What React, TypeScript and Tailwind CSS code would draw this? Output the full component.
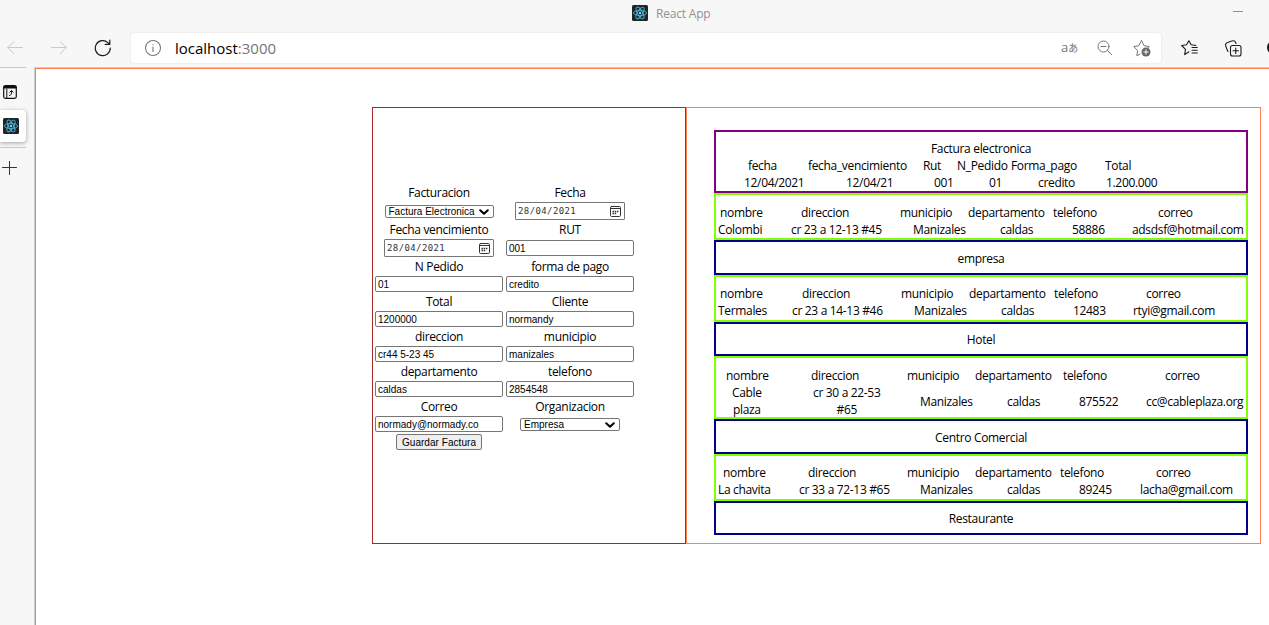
import React from "react";

function ReactMark() {
  return (
    <svg width="16" height="16" viewBox="0 0 16 16" className="block shrink-0">
      <rect width="16" height="16" rx="1.5" fill="#20232a" />
      <g fill="none" stroke="#4fb3cf" strokeWidth="0.9">
        <ellipse cx="8" cy="8" rx="6.6" ry="2.6" />
        <ellipse cx="8" cy="8" rx="6.6" ry="2.6" transform="rotate(60 8 8)" />
        <ellipse cx="8" cy="8" rx="6.6" ry="2.6" transform="rotate(120 8 8)" />
      </g>
      <circle cx="8" cy="8" r="1.3" fill="#61dafb" />
    </svg>
  );
}

function Svg({ w, h, color, sw = 1, className = "", children }: { w: number; h: number; color: string; sw?: number; className?: string; children: React.ReactNode }) {
  return (
    <svg width={w} height={h} viewBox={`0 0 ${w} ${h}`} fill="none" stroke={color} strokeWidth={sw} strokeLinecap="round" strokeLinejoin="round" className={`block shrink-0 ${className}`}>
      {children}
    </svg>
  );
}

function TitleBar() {
  return (
    <div className="flex h-[33px] items-start pl-[632px] pt-[5px]">
      <ReactMark />
      <span className="ml-2 w-[577px] text-[12px] leading-[18px] tracking-[-0.2px] text-[#929292]">React App</span>
      <span className="mt-[6px] h-px w-[10px] bg-[#8f8f8f]" />
    </div>
  );
}

function Toolbar() {
  return (
    <div className="flex h-[34px] items-start">
      <Svg w={16} h={14} color="#c9c9c9" className="ml-[7px] mt-[8px]">
        <path d="M7 .7.7 6.5 7 12.8M.7 6.5H15.5" />
      </Svg>
      <Svg w={16} h={14} color="#c9c9c9" className="ml-[28px] mt-[8px]">
        <path d="M9 .7l6.3 5.8L9 12.8M15.3 6.5H.5" />
      </Svg>
      <Svg w={18} h={18} color="#1b1b1b" sw={1.2} className="ml-[27px] mt-[6px]">
        <path d="M16.3 9a7.5 7.5 0 1 1-2.4-5.400l1.600 1.500M15.800 1v4.400H11.200" />
      </Svg>
      <div className="ml-[19px] flex h-[30px] w-[1030px] shrink-0 items-start rounded-[4px] bg-white shadow-[0_0_3px_rgba(0,0,0,0.08)]">
        <Svg w={18} h={18} color="#767676" sw={1.1} className="ml-[13px] mt-[6px]">
          <circle cx="9" cy="9" r="7.5" />
          <path d="M9 8v4.500M9 5.500v.2" />
        </Svg>
        <span className="ml-[13px] w-[886px] shrink-0 text-[15px] leading-[30px] text-[#767676]"><span className="text-black">localhost</span>:3000</span>
        <span className="w-[20px] shrink-0 whitespace-nowrap text-[13px] leading-[28px] text-[#767676]">a<span className="text-[10px]">あ</span></span>
        <Svg w={16} h={16} color="#767676" className="ml-[16px] mt-[7px]">
          <circle cx="6.5" cy="6.5" r="5.5" />
          <path d="M4 6.500h5M10.500 10.500l4.200 4.200" />
        </Svg>
        <Svg w={18} h={18} color="#767676" className="ml-[20px] mt-[6px]">
          <path d="M7 15.200l-3.200 1.500.8-5L.8 7.500l5-.8L8.500 1.300l2.500 5.400 5.200.8-1.500 1.500" />
          <circle cx="13" cy="13" r="4.5" fill="#666" stroke="none" />
          <path d="M10.800 13h4.400M13 10.800v4.400" stroke="#fff" />
        </Svg>
      </div>
      <Svg w={18} h={17} color="#1b1b1b" sw={1.1} className="ml-[20px] mt-[7px]">
        <path d="M8 11.800l-4.300 2.800.8-5.300L.7 5.500l4.800-.7L7.900.8l2.300 4 4.800.7M11 7.500h5.300M11 10.300h5.300M11 13h5.300" />
      </Svg>
      <Svg w={17} h={17} color="#1b1b1b" sw={1.1} className="ml-[26px] mt-[7px]">
        <path d="M3 11.500C1.500 8.500.2 5.500.7 4 1.200 2.500 7.500.5 9 .7c1.300.2 1.500 1.800 2 2.800" />
        <rect x="5.5" y="5.5" width="10.5" height="10.5" rx="2" />
        <path d="M10.750 8v5.500M8 10.750h5.500" />
      </Svg>
      <span className="ml-[25px] mt-[7px] size-[15px] shrink-0 rounded-full bg-[#1b1b1b]" />
    </div>
  );
}

function TabStrip() {
  return (
    <div className="flex w-[34px] shrink-0 flex-col">
      <div className="h-px w-[26px] bg-[#c9c9c9]" />
      <Svg w={14} h={14} color="#111" sw={1.2} className="ml-[3px] mt-[17px]">
        <rect x=".7" y=".7" width="12.6" height="12.6" rx="1.8" />
        <path d="M1 1.500h12v1.500H1z" fill="#111" />
        <path d="M3.800 4v9" strokeWidth="1" />
        <path d="M6.500 10.500c1.800 0 2.300-1.500 2-4.500M6.800 7.200 8.500 5.500l1.700 1.700" strokeWidth="1" />
      </Svg>
      <div className="mt-[11px] flex h-[32px] w-[26px] items-center rounded-r-[4px] bg-white pl-[3px] shadow-[0_1px_4px_rgba(0,0,0,0.35)]"><ReactMark /></div>
      <div className="mt-[5px] h-px w-[26px] bg-[#c9c9c9]" />
      <Svg w={15} h={14} color="#333" className="ml-[2px] mt-[13px]"><path d="M7.500.5v13M.5 6.500h14" /></Svg>
    </div>
  );
}

function Field({ label, value }: { label: string; value: string }) {
  return (
    <label className="flex h-[35px] w-[128px] flex-col items-center">
      <span className="leading-[18px]">{label}</span>
      <TextBox value={value} />
    </label>
  );
}

function TextBox({ value }: { value: string }) {
  return <input defaultValue={value} className="block h-[16px] w-[128px] rounded-[2px] border border-[#767676] bg-white px-[2px] pt-px font-['Liberation_Sans',sans-serif] text-[10px] leading-[13px] tracking-normal text-black" />;
}

function Choice({ value, className }: { value: string; className: string }) {
  return (
    <button className={`flex h-[13px] items-center justify-between rounded-[2px] border border-[#767676] bg-white pl-[3px] pr-[4px] font-['Liberation_Sans',sans-serif] text-[10px] leading-[11px] tracking-normal ${className}`}>
      {value}
      <Svg w={10} h={6} color="#000" sw={2}><path d="M1.200 1.200 5 4.800l3.800-3.600" /></Svg>
    </button>
  );
}

function DateBox() {
  return (
    <div className="flex h-[18px] w-[110px] items-center justify-between rounded-[1px] border border-[#767676] bg-white pl-[2px] pr-[3px] font-['DejaVu_Sans_Mono',monospace] text-[9px] leading-[16px] tracking-[0.4px] text-[#333]">
      28/04/2021
      <Svg w={11} h={11} color="#333">
        <rect x=".5" y=".5" width="10" height="10" rx="1.2" />
        <path d="M.5 2.500h10" />
        <path d="M2.500 5.500h6.500M2.500 7.500h4" strokeDasharray="1.500 .7" strokeLinecap="butt" strokeWidth="1.300" />
      </Svg>
    </div>
  );
}

function InvoiceForm() {
  return (
    <section className="h-[437px] w-[314px] shrink-0 border border-[#a52a2a] pl-[2px] pt-[76px]">
      <div className="grid grid-cols-[128px_128px] gap-x-[3px] text-center">
        <div className="flex h-[37px] flex-col items-center"><span className="mb-[3px] leading-[18px]">Facturacion</span><Choice value="Factura Electronica" className="w-[109px]" /></div>
        <div className="flex h-[37px] flex-col items-center"><span className="leading-[18px]">Fecha</span><DateBox /></div>
        <div className="flex h-[37px] flex-col items-center"><span className="leading-[18px]">Fecha vencimiento</span><DateBox /></div>
        <div className="flex h-[37px] flex-col items-center"><span className="mb-px leading-[18px]">RUT</span><TextBox value="001" /></div>
        <Field label="N Pedido" value="01" />
        <Field label="forma de pago" value="credito" />
        <Field label="Total" value="1200000" />
        <Field label="Cliente" value="normandy" />
        <Field label="direccion" value="cr44 5-23 45" />
        <Field label="municipio" value="manizales" />
        <Field label="departamento" value="caldas" />
        <Field label="telefono" value="2854548" />
        <Field label="Correo" value="normady@normady.co" />
        <div className="flex h-[35px] flex-col items-center"><span className="mb-[2px] leading-[18px]">Organizacion</span><Choice value="Empresa" className="w-[100px]" /></div>
        <button className="mt-px h-[16px] w-[86px] justify-self-center rounded-[2px] border border-[#767676] bg-[#efefef] pt-px font-['Liberation_Sans',sans-serif] text-[10px] leading-[13px] tracking-[0.05px]">Guardar Factura</button>
      </div>
    </section>
  );
}

function Cells({ items, className }: { items: string[]; className: string }) {
  return (
    <div className={`grid items-center leading-[17px] ${className}`}>
      {items.map((t) => <span key={t} className="whitespace-pre text-center justify-self-start">{t}</span>)}
    </div>
  );
}

const headings = ["nombre", "direccion", "municipio", "departamento", "telefono", "correo"];

const clients = [
  {
    values: ["Colombi", "cr 23 a 12-13 #45", "Manizales", "caldas", "58886", "adsdsf@hotmail.com"],
    kind: "empresa",
    box: "h-[47px] pt-[9px]",
    band: "h-[35px]",
    head: "pl-[4px] grid-cols-[81px_99px_68px_85px_105px_80px]",
    body: "pl-[2px] grid-cols-[73px_122px_87px_72px_60px_114px]",
  },
  {
    values: ["Termales", "cr 23 a 14-13 #46", "Manizales", "caldas", "12483", "rtyi@gmail.com"],
    kind: "Hotel",
    box: "h-[47px] pt-[8px]",
    band: "h-[34px]",
    head: "pl-[4px] grid-cols-[82px_99px_68px_85px_92px_90px]",
    body: "pl-[2px] grid-cols-[74px_122px_87px_72px_60px_113px]",
  },
  {
    values: ["Cable\nplaza", "cr 30 a 22-53\n#65", "Manizales", "caldas", "875522", "cc@cableplaza.org"],
    kind: "Centro Comercial",
    box: "h-[63px] pt-[9px]",
    band: "h-[35px]",
    head: "pl-[10px] grid-cols-[85px_96px_68px_88px_102px_80px]",
    body: "pl-[16px] leading-[16px] grid-cols-[81px_107px_87px_72px_67px_100px]",
  },
  {
    values: ["La chavita", "cr 33 a 72-13 #65", "Manizales", "caldas", "89245", "lacha@gmail.com"],
    kind: "Restaurante",
    box: "h-[47px] pt-[8px]",
    band: "h-[34px]",
    head: "pl-[7px] grid-cols-[85px_99px_68px_85px_96px_80px]",
    body: "pl-[2px] grid-cols-[81px_121px_87px_72px_61px_107px]",
  },
];

function InvoiceList() {
  return (
    <section className="h-[437px] w-[575px] shrink-0 border border-[#ff7f50] pl-[27px] pt-[22px]">
      <div className="w-[534px]">
        <div className="h-[63px] border-2 border-[#800080] pt-[8px]">
          <div className="text-center leading-[17px]">Factura electronica</div>
          <Cells className="pl-[32px] grid-cols-[60px_115px_34px_54px_94px_80px]" items={["fecha", "fecha_vencimiento", "Rut", "N_Pedido", "Forma_pago", "Total"]} />
          <Cells className="pl-[28px] grid-cols-[102px_88px_55px_49px_68px_80px]" items={["12/04/2021", "12/04/21", "001", "01", "credito", "1.200.000"]} />
        </div>
        {clients.map((c) => (
          <React.Fragment key={c.kind}>
            <div className={`border-2 border-[#7fff00] ${c.box}`}>
              <Cells className={c.head} items={headings} />
              <Cells className={c.body} items={c.values} />
            </div>
            <div className={`flex items-center justify-center border-2 border-[#00008b] pt-[2px] ${c.band}`}>{c.kind}</div>
          </React.Fragment>
        ))}
      </div>
    </section>
  );
}

export default function App() {
  return (
    <div className="flex h-[625px] w-[1269px] flex-col overflow-hidden bg-[#f7f7f7] font-['Open_Sans','Noto_Sans_CJK_JP',sans-serif] text-black">
      <TitleBar />
      <Toolbar />
      <div className="flex min-h-0 flex-1">
        <TabStrip />
        <div className="flex-1 border-l border-t border-[#cccccc]">
          <main className="flex h-full items-start border-l border-t border-[#ff7f50] bg-white pl-[336px] pt-[38px] text-[12px] tracking-[-0.33px]">
            <InvoiceForm />
            <InvoiceList />
          </main>
        </div>
      </div>
    </div>
  );
}
